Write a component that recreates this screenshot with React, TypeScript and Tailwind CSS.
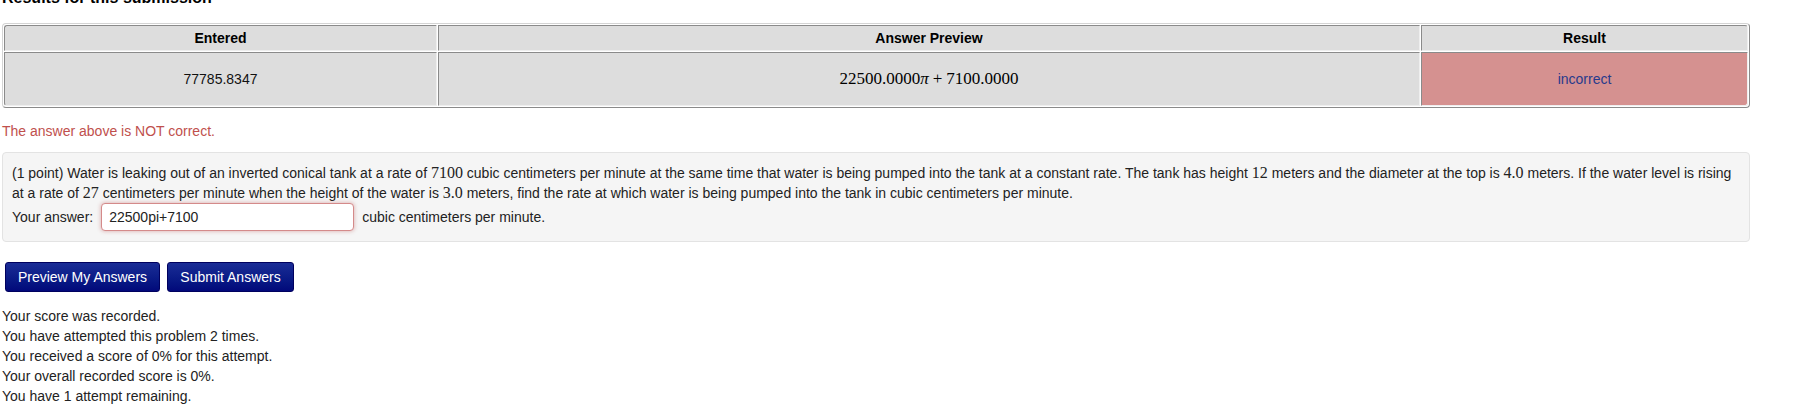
import React from 'react';

const serif = "font-['Liberation_Serif','Times_New_Roman',serif]";

function M({ children }: { children: React.ReactNode }) {
    return <span className={`${serif} text-[16px] leading-none`}>{children}</span>;
}

const scoreLines = [
    'Your score was recorded.',
    'You have attempted this problem 2 times.',
    'You received a score of 0% for this attempt.',
    'Your overall recorded score is 0%.',
    'You have 1 attempt remaining.',
];

export default function App() {
    return (
        <div className="min-h-[416px] overflow-hidden bg-white pl-[2px] font-['Liberation_Sans',Arial,sans-serif] text-[14px] leading-[20px] text-[#222]">
            <h2 className="-mt-[11px] text-[16px] font-bold leading-[18px] text-black">Results for this submission</h2>

            {/* RESULTS TABLE */}
            <table className="mt-[16px] w-[1748px] table-fixed border-separate border-spacing-[1px] rounded-[4px] border border-t-[#d4d4d4] border-l-[#d4d4d4] border-r-[#8a8a8a] border-b-[#8a8a8a] text-center">
                <thead>
                    <tr>
                        <th className="h-[26px] w-[433px] rounded-tl-[3px] border border-t-[#8a8a8a] border-l-[#8a8a8a] border-r-[#eeeeee] border-b-[#eeeeee] bg-[#dddddd] p-0 text-[14px] font-bold text-black">Entered</th>
                        <th className="h-[26px] w-[982px] border border-t-[#8a8a8a] border-l-[#8a8a8a] border-r-[#eeeeee] border-b-[#eeeeee] bg-[#dddddd] p-0 text-[14px] font-bold text-black">Answer Preview</th>
                        <th className="h-[26px] rounded-tr-[3px] border border-t-[#8a8a8a] border-l-[#8a8a8a] border-r-[#eeeeee] border-b-[#eeeeee] bg-[#dddddd] p-0 text-[14px] font-bold text-black">Result</th>
                    </tr>
                </thead>
                <tbody>
                    <tr>
                        <td className="h-[54px] rounded-bl-[3px] border border-t-[#8a8a8a] border-l-[#8a8a8a] border-r-[#eeeeee] border-b-[#eeeeee] bg-[#dddddd] p-0 text-[#111]">77785.8347</td>
                        <td className="h-[54px] border border-t-[#8a8a8a] border-l-[#8a8a8a] border-r-[#eeeeee] border-b-[#eeeeee] bg-[#dddddd] p-0 text-black">
                            <span className={`${serif} text-[17px]`}>
                                22500.0000<i className="italic">π</i>
                                <span className="mx-[4px]">+</span>
                                7100.0000
                            </span>
                        </td>
                        <td className="h-[54px] rounded-br-[3px] border border-t-[#8a8a8a] border-l-[#8a8a8a] border-r-[#eeeeee] border-b-[#eeeeee] bg-[#d59190] p-0 text-[#283a8c]">incorrect</td>
                    </tr>
                </tbody>
            </table>

            <div className="mt-[13px] text-[#c0504d]">The answer above is NOT correct.</div>

            {/* PROBLEM */}
            <div className="mt-[11px] w-[1748px] rounded-[4px] border border-[#e3e3e3] bg-[#f5f5f5] py-[10px] pl-[9px] pr-[4px] text-[#222]">
                <p>
                    (1 point) Water is leaking out of an inverted conical tank at a rate of <M>7100</M> cubic centimeters per minute at the same time that water is being pumped into the tank at a constant rate. The tank has height <M>12</M> meters and the diameter at the top is <M>4.0</M> meters. If the water level is rising at a rate of <M>27</M> centimeters per minute when the height of the water is <M>3.0</M> meters, find the rate at which water is being pumped into the tank in cubic centimeters per minute.
                </p>
                <div className="flex items-center">
                    <span>Your answer:</span>
                    <input
                        readOnly
                        value="22500pi+7100"
                        className="ml-[8px] h-[28px] w-[253px] rounded-[4px] border border-[#d48a8a] bg-white px-[7px] text-[14px] text-[#222] shadow-[0_0_4px_rgba(185,74,72,0.45)] outline-none"
                    />
                    <span className="ml-[8px]">cubic centimeters per minute.</span>
                </div>
            </div>

            {/* BUTTONS */}
            <div className="ml-[3px] mt-[20px] flex gap-[7px]">
                <button className="h-[30px] w-[155px] rounded-[3px] border border-[#00005e] bg-gradient-to-b from-[#1a2c96] to-[#02087a] text-[14px] text-white">Preview My Answers</button>
                <button className="h-[30px] w-[127px] rounded-[3px] border border-[#00005e] bg-gradient-to-b from-[#1a2c96] to-[#02087a] text-[14px] text-white">Submit Answers</button>
            </div>

            <div className="mt-[14px]">
                {scoreLines.map((line) => (
                    <div key={line}>{line}</div>
                ))}
            </div>
        </div>
    );
}
